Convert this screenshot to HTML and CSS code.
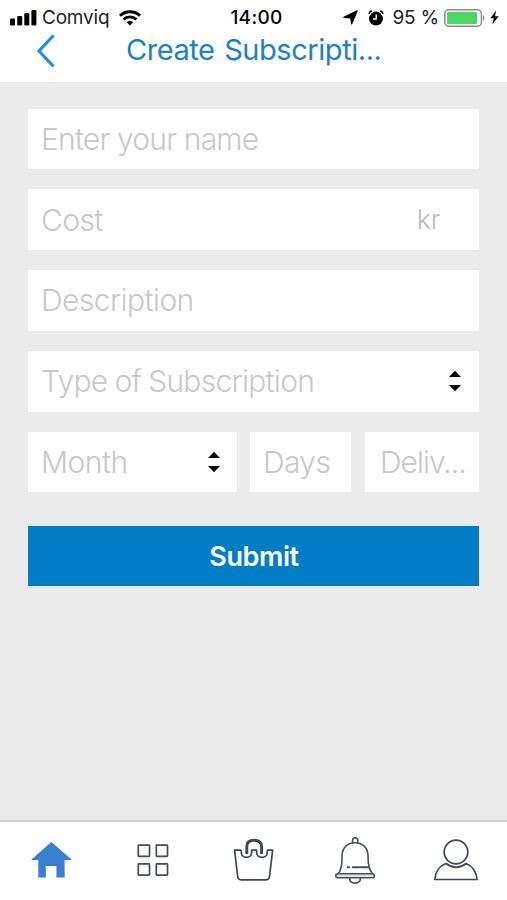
FILE: index.html
```html
<!DOCTYPE html>
<html lang="en">
<head>
<meta charset="utf-8">
<title>Create Subscription</title>
<link rel="stylesheet" href="styles.css">
</head>
<body>
<div class="screen">
  <header class="header">
    <div class="status">
      <div class="status-left">
        <svg class="signal" width="27" height="17" viewBox="0 0 27 17"><rect x="0" y="9.5" width="5" height="7" rx="1.3"/><rect x="7.2" y="7" width="5" height="9.5" rx="1.3"/><rect x="14.3" y="4" width="5" height="12.5" rx="1.3"/><rect x="21.4" y="1" width="5" height="15.5" rx="1.3"/></svg>
        <span class="carrier">Comviq</span>
        <svg class="wifi" width="22" height="16" viewBox="0 0 22 16" fill="none" stroke="#000" stroke-width="2.8"><path d="M1 5.8C6.5 0.4 15.5 0.4 21 5.8"/><path d="M4.6 9.5C8.2 6 13.8 6 17.4 9.5"/><path d="M11 15.5L7.7 12.2Q11 9.2 14.3 12.2Z" fill="#000" stroke="none"/></svg>
      </div>
      <span class="clock">14:00</span>
      <div class="status-right">
        <svg class="arrow" width="15" height="15" viewBox="0 0 15 15"><path d="M14.2.8L8.6 14L7.8 7.8L.8 7.3Z" stroke="#000" stroke-width="1.2" stroke-linejoin="round"/></svg>
        <svg class="alarm" width="16" height="16" viewBox="0 0 16 16"><circle cx="8" cy="8.6" r="7"/><path d="M.9 4.3Q1.5 1.5 4.3.8M15.100 4.300Q14.500 1.500 11.700.8" fill="none" stroke="#fff" stroke-width="3.2"/><path d="M.9 3.800Q1.500 1.500 3.900.8M15.100 3.800Q14.500 1.500 12.100.8" fill="none" stroke="#000" stroke-width="1.5"/><path d="M8.200 4.500V9H5" fill="none" stroke="#fff" stroke-width="1.300"/></svg>
        <span class="percent">95 %</span>
        <svg class="battery" width="43" height="18" viewBox="0 0 43 18"><rect x=".8" y=".8" width="36.6" height="16.4" rx="4" fill="#fff" stroke="#8b8b8d" stroke-width="1.5"/><rect x="3" y="3" width="30" height="12" rx="1.2" fill="#4cd562"/><path d="M39 6Q42 9 39 12Z" fill="#8b8b8d"/></svg>
        <svg class="bolt" width="9" height="15" viewBox="0 0 9 15"><path d="M6.200.5L.3 8.300H3.700L2.300 14.500L8.600 6.300H5Z"/></svg>
      </div>
    </div>
    <div class="nav">
      <svg class="back" width="20" height="36" viewBox="0 0 20 36"><path d="M18.5 2.5L4 18L18.5 33.5" fill="none" stroke="#1f8ded" stroke-width="3.2"/></svg>
      <h1 class="title">Create Subscripti...</h1>
    </div>
  </header>
  <main class="form">
    <div class="field"><span class="t-name">Enter your name</span></div>
    <div class="field"><span class="t-cost">Cost</span><span class="unit">kr</span></div>
    <div class="field"><span class="t-desc">Description</span></div>
    <div class="field"><span class="t-type">Type of Subscription</span>
      <svg class="sort" width="14" height="22" viewBox="0 0 14 22"><path d="M1 7L7 .7L13 7ZM1 15L7 21.3L13 15Z"/></svg></div>
    <div class="row">
      <div class="field month"><span class="t-month">Month</span>
        <svg class="sort" width="14" height="22" viewBox="0 0 14 22"><path d="M1 7L7 .7L13 7ZM1 15L7 21.3L13 15Z"/></svg></div>
      <div class="field days"><span class="t-days">Days</span></div>
      <div class="field delivery"><span class="t-deliv">Deliv...</span></div>
    </div>
    <button class="submit" type="button">Submit</button>
  </main>
  <nav class="tabs">
    <svg viewBox="0 0 60 60" width="60" height="60"><path d="M30.3 12L50.5 29.5V30H43.6V47.6H35.4V36H24.8V47.6H17.3V30H10.5V29.5Z" fill="#397fd3"/></svg>
    <svg viewBox="0 0 60 60" width="60" height="60" fill="none" stroke="#484b55" stroke-width="1.7"><rect x="16.3" y="15.2" width="11.2" height="11.2" rx=".6"/><rect x="34.3" y="15.2" width="11.2" height="11.2" rx=".6"/><rect x="16.3" y="33.9" width="11.2" height="11.2" rx=".6"/><rect x="34.3" y="33.9" width="11.2" height="11.2" rx=".6"/></svg>
    <svg viewBox="0 0 60 60" width="60" height="60" fill="none" stroke="#404554" stroke-width="1.7" stroke-linejoin="round"><path d="M17.3 20.2H10.600L13.600 46Q14 49.800 17.200 49.800H42Q45.200 49.800 45.600 46L48.600 20.200H43.300V22.500C43.300 29 32.600 29 32.600 22.500V20.200H27.700V22.500C27.700 29 17.300 29 17.300 22.500V20.200"/><path d="M22.800 24V16.500Q22.800 10.300 30 10.300Q37.600 10.300 37.600 16.500V24" stroke-width="2.900"/></svg>
    <svg viewBox="0 0 60 60" width="60" height="60" fill="none" stroke="#484f5b" stroke-width="1.6" stroke-linecap="round" stroke-linejoin="round"><path d="M13 43.800C18 38 16.800 31 17 25.500C17.500 17 23 12.800 30 12.800S42.500 17 43 25.500C43.200 31 42.500 38 47.500 43.800"/><rect x="10.800" y="43.800" width="38.600" height="4" rx="2" fill="#dce4e8"/><path d="M27.600 12.700V10.500C27.600 6.900 32.800 6.900 32.800 10.500V12.700M24.500 48C25 54.800 35 54.800 35.600 48"/><path d="M22.700 37.200H24.200M27.800 37.200H44" stroke-width="1.900"/></svg>
    <svg viewBox="0 0 60 60" width="60" height="60" fill="none" stroke="#404858" stroke-width="1.7" stroke-linejoin="round"><circle cx="30" cy="22" r="11.8"/><path d="M20 33.500C13.300 36 9.300 42.500 8.800 49.500H51.100C50.600 42.500 46.600 36 40.200 33.500C33.800 38.300 26.400 38.300 20 33.500Z"/></svg>
  </nav>
</div>
</body>
</html>
```
FILE: styles.css
```css
* { box-sizing: border-box; }
body { margin: 0; background: #ebebeb; font-family: Inter, "Liberation Sans", sans-serif; }
svg { display: block; flex: none; }
.screen { width: 507px; height: 900px; display: flex; flex-direction: column; overflow: hidden; }
.header { height: 82px; background: #fff; }
.status { height: 34px; display: grid; grid-template-columns: 1fr auto 1fr; align-items: center; color: #222; font-size: 19px; line-height: 34px; white-space: nowrap; }
.status-left, .status-right { display: flex; align-items: center; }
.status-left { padding-left: 10px; }
.status-right { justify-content: flex-end; padding-right: 8px; }
.carrier { margin-left: 5px; letter-spacing: -0.2px; padding-top: 1px; }
.wifi { margin-left: 10px; }
.clock { color: #000; font-weight: 500; letter-spacing: 0.3px; padding: 1px 0 0 6px; }
.alarm { margin-left: 10px; }
.percent { margin-left: 8px; padding-top: 1px; letter-spacing: -0.2px; }
.battery { margin-left: 5px; }
.bolt { margin-left: 3px; }
.nav { display: flex; align-items: center; height: 34px; padding-left: 35px; }
.title { margin: 0 0 0 71px; font-size: 29px; font-weight: 400; line-height: 32px; padding-bottom: 2px; letter-spacing: -0.45px; word-spacing: 2px; color: #1b82c3; white-space: nowrap; }
.form { flex: 1; display: flex; flex-direction: column; gap: 20.2px; padding: 26.6px 28px 0; }
.field { height: 60.6px; background: #fff; display: flex; align-items: center; padding: 0 13px; color: #c8c8cb; font-size: 30px; font-weight: 300; line-height: 60px; white-space: nowrap; }
.t-name { letter-spacing: -0.8px; }
.t-cost { letter-spacing: -0.6px; }
.t-desc { letter-spacing: -0.55px; }
.t-type { letter-spacing: -0.7px; word-spacing: -0.8px; }
.t-month { letter-spacing: -0.5px; }
.t-days { letter-spacing: -0.6px; }
.t-deliv { letter-spacing: -1px; }
.unit { margin-left: auto; margin-right: 26px; font-size: 27px; letter-spacing: -0.4px; color: #bcbcbc; }
.sort { margin-left: auto; margin-right: 4px; }
.row { display: grid; grid-template-columns: 209px 101px 1fr; }
.month .sort { margin-right: 3px; }
.days { margin: 0 -13px 0 13px; }
.delivery { margin-left: 27px; padding-left: 15px; }
.submit { height: 60.6px; margin-top: 13.4px; border: 0; padding: 1px 0 0 1px; background: #007dc5; color: #fff; font: 600 27px/59px Inter, "Liberation Sans", sans-serif; letter-spacing: -0.4px; }
.tabs { height: 80px; background: #fff; border-top: 2px solid #d0d0d0; display: grid; grid-template-columns: repeat(5, 101.2px); justify-items: center; padding: 8px 0 0 0.7px; }
```
